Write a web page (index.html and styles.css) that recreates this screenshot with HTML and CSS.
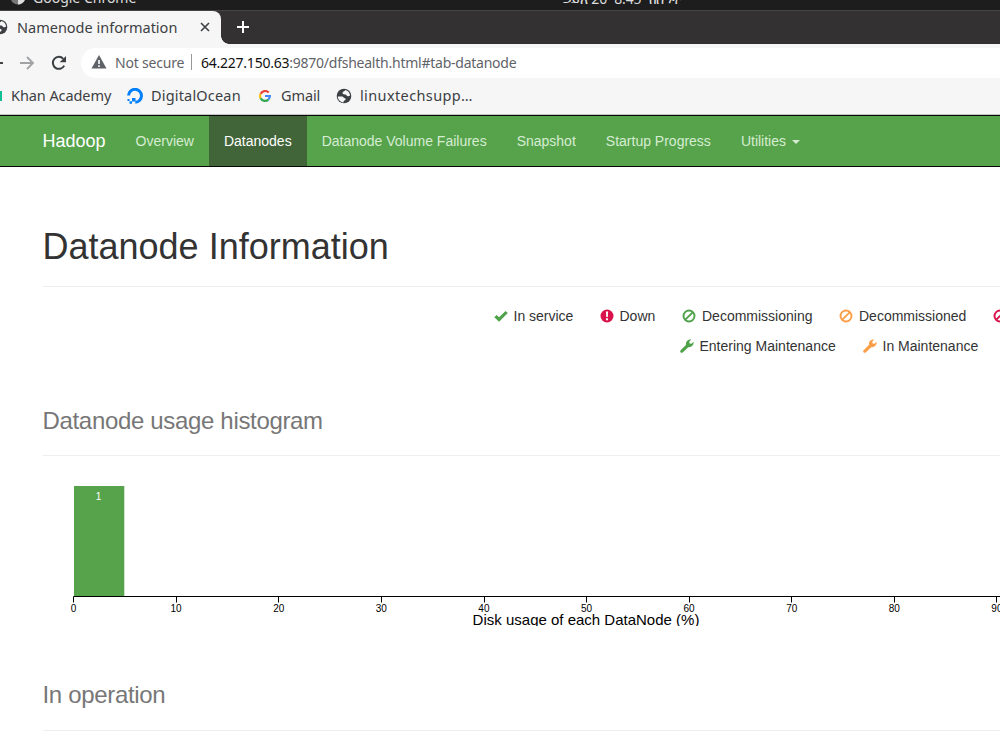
FILE: index.html
```html
<!DOCTYPE html>
<html lang="en">
<head>
    <meta charset="UTF-8">
    <title>Namenode information</title>
    <link rel="stylesheet" href="styles.css">
</head>
<body>
    <!-- Shared icons -->
    <svg class="defs">
        <symbol id="globe" viewBox="0 0 16 16">
            <circle cx="8" cy="8" r="7.3" fill="currentColor"/>
            <path d="M1.800 8.500H6c1.500 0 1.700 1.800 3 1.800.8 0 .9 1.200.2 1.800-.8.700-1.700.8-1.800 2.300C4.300 14 2 11.700 1.800 8.500zM9.300 2C9.300 3.400 6.500 3.200 6.500 5c0 1.500 2 1.500 3 1.500S10.700 8.300 12 8.300c.9 0 1.400-.5 2.100-.5C14 4.800 12 2.600 9.300 2z" fill="#f6f6f6"/>
        </symbol>
        <symbol id="ban" viewBox="0 0 14 14">
            <circle cx="7" cy="7" r="5.500" fill="none" stroke="currentColor" stroke-width="1.900"/>
            <path d="M3.300 10.700l7.400-7.400" stroke="currentColor" stroke-width="1.900"/>
        </symbol>
        <symbol id="wrench" viewBox="0 0 14 14">
            <path d="M.4 11.400L5.900 5.900C5.500 2.600 8 .2 11.300.6L9.200 2.700l.5 1.700 1.700.4 2.200-2.100c.5 3.400-2 6-5.300 5.500L2.700 13.600c-1.500.9-3.200-.8-2.300-2.200z" fill="currentColor"/>
        </symbol>
    </svg>

    <!-- Desktop bar -->
    <div class="topbar">
        <svg class="chrome-icon" viewBox="0 0 16 16"><circle cx="8" cy="8" r="7.500" fill="#777"/><path d="M8 8L14 3.500A7.500 7.500 0 0 1 8 15.500z" fill="#ddd"/><circle cx="8" cy="8" r="3" fill="#aaa"/></svg>
        <span class="app-name">Google Chrome</span>
        <span class="clock">ኃይለ 20&nbsp; 8:45 &nbsp;ከሰዓት</span>
    </div>

    <!-- Tabs -->
    <div class="tabstrip">
        <div class="tab">
            <svg class="tab-icon"><use href="#globe"/></svg>
            <span class="tab-title">Namenode information</span>
            <svg class="tab-close" viewBox="0 0 10 10"><path d="M1 1l8 8M9 1l-8 8" stroke="#3c4043" stroke-width="1.600"/></svg>
        </div>
        <div class="tab-curve"></div>
        <svg class="new-tab" viewBox="0 0 12 12"><path d="M6 0v12M0 6h12" stroke="#fff" stroke-width="2"/></svg>
    </div>

    <!-- Toolbar -->
    <div class="toolbar">
        <svg class="back" viewBox="0 0 3 16"><path d="M0 8h3" stroke="#444" stroke-width="2"/></svg>
        <svg class="forward" viewBox="0 0 16 16"><path d="M1 8h13M8 2l6 6-6 6" fill="none" stroke="#a0a2a4" stroke-width="1.800"/></svg>
        <svg class="reload" viewBox="0 0 16 16"><path d="M13.200 10.600A6 6 0 1 1 12.300 3.800" fill="none" stroke="#3c4043" stroke-width="2"/><path d="M15 1v6.300H8.700z" fill="#3c4043"/></svg>
        <div class="address">
            <svg class="warning" viewBox="0 0 16 14"><path d="M8 0l7.500 13.500H.5z" fill="#5f6368"/><path d="M8 5v4M8 10.300v1.700" stroke="#fff" stroke-width="1.600"/></svg>
            <span class="secure">Not secure</span>
            <span class="divider"></span>
            <span class="url"><b>64.227.150.63</b><span class="path">:9870/dfshealth.html#tab-datanode</span></span>
        </div>
    </div>

    <!-- Bookmarks -->
    <div class="bookmarks">
        <span class="khan-icon"></span>
        <span class="bm khan">Khan Academy</span>
        <svg class="do-icon" viewBox="0 0 16 16"><path d="M1.500 7.500A6.500 6.500 0 1 1 8.300 14.300" fill="none" stroke="#0080ff" stroke-width="3"/><path d="M5 10h3.500v3.500H5zM2.500 13.200h2.500v2.500H2.500zM.5 11h2v2h-2z" fill="#0080ff"/></svg>
        <span class="bm ocean">DigitalOcean</span>
        <svg class="g-icon" viewBox="0 0 12 12"><g fill="none" stroke-width="2.200"><path d="M9.700 2.600A4.900 4.900 0 0 0 1.600 3.900" stroke="#ea4335"/><path d="M1.600 3.900a4.900 4.900 0 0 0 0 4.300" stroke="#fbbc05"/><path d="M1.600 8.200a4.900 4.900 0 0 0 7.700 1.400" stroke="#34a853"/><path d="M9.300 9.600A4.900 4.900 0 0 0 10.900 6H6" stroke="#4285f4"/></g></svg>
        <span class="bm gmail">Gmail</span>
        <svg class="link-icon"><use href="#globe"/></svg>
        <span class="bm linux">linuxtechsupp…</span>
    </div>

    <!-- Hadoop navigation -->
    <nav class="navbar">
        <a class="brand">Hadoop</a>
        <a>Overview</a>
        <a class="active">Datanodes</a>
        <a>Datanode Volume Failures</a>
        <a>Snapshot</a>
        <a>Startup Progress</a>
        <a>Utilities <span class="caret"></span></a>
    </nav>

    <main>
        <h1>Datanode Information</h1>

        <div class="legend">
            <div class="legend-row">
                <span class="green"><svg viewBox="0 0 14 14"><path d="M.3 8.200l2.300-2.300 2.500 2.400L11.500 1.900l2.300 2.200-8.700 8.700z" fill="currentColor"/></svg></span><span class="service">In service</span>
                <span class="red"><svg viewBox="0 0 14 14"><circle cx="7" cy="7" r="6.500" fill="currentColor"/><path d="M5.900 2.500h2.200L7.800 8H6.200zM6 9.200h2v2H6z" fill="#fff"/></svg></span><span class="down">Down</span>
                <span class="green"><svg><use href="#ban"/></svg></span><span class="decommissioning">Decommissioning</span>
                <span class="orange"><svg><use href="#ban"/></svg></span><span class="decommissioned">Decommissioned</span>
                <span class="red last"><svg><use href="#ban"/></svg></span>
            </div>
            <div class="legend-row second">
                <span class="green"><svg><use href="#wrench"/></svg></span><span class="entering">Entering Maintenance</span>
                <span class="orange"><svg><use href="#wrench"/></svg></span><span>In Maintenance</span>
            </div>
        </div>

        <h3>Datanode usage histogram</h3>
        <svg class="histogram" width="957" height="150">
            <rect x="31" y="10" width="50.300" height="110" fill="#56a34c"/>
            <text class="count" x="55.500" y="24">1</text>
            <path class="axis" d="M30.500 126.500v-6H957M133.500 120.500v6M235.500 120.500v6M338.500 120.500v6M441.500 120.500v6M543.500 120.500v6M646.500 120.500v6M748.500 120.500v6M851.500 120.500v6M953.500 120.500v6"/>
            <g class="ticks">
                <text x="30.500" y="136">0</text>
                <text x="133.100" y="136">10</text>
                <text x="235.700" y="136">20</text>
                <text x="338.300" y="136">30</text>
                <text x="440.900" y="136">40</text>
                <text x="543.500" y="136">50</text>
                <text x="646.100" y="136">60</text>
                <text x="748.700" y="136">70</text>
                <text x="851.300" y="136">80</text>
                <text x="953.900" y="136">90</text>
            </g>
            <text class="label" x="543" y="149">Disk usage of each DataNode (%)</text>
        </svg>

        <h3 class="operation">In operation</h3>
    </main>
</body>
</html>
```
FILE: styles.css
```css
* {
    margin: 0;
    padding: 0;
    box-sizing: border-box;
}

body {
    width: 1000px;
    height: 750px;
    overflow: hidden;
    background: #fff;
    color: #333;
    font-family: "Liberation Sans", Arial, sans-serif;
    font-size: 14px;
    white-space: nowrap;
}

svg {
    display: block;
    flex-shrink: 0;
}

.defs {
    display: none;
}

.topbar,
.tabstrip,
.toolbar,
.bookmarks {
    display: flex;
    align-items: center;
    font-family: "Noto Sans", "Open Sans", sans-serif;
}

/* Desktop bar */
.topbar {
    height: 10px;
    overflow: hidden;
    align-items: flex-end;
    padding-left: 10px;
    background: #1d1d1d;
    color: #ddd;
    font-size: 14px;
    line-height: 20px;
}

.chrome-icon {
    width: 16px;
    height: 16px;
    margin-bottom: 5px;
}

.app-name {
    width: 531px;
    margin-left: 7px;
    margin-bottom: 2px;
}

.clock {
    margin-bottom: 1px;
    margin-left: -1px;
    letter-spacing: -0.1px;
}

/* Tabs */
.tabstrip {
    height: 34px;
    background: #333132;
    border-top: 1px solid #444;
}

.tab {
    display: flex;
    align-items: center;
    width: 221px;
    height: 34px;
    padding-bottom: 2px;
    background: #f6f6f6;
    border-radius: 0 8px 0 0;
    color: #3c4043;
    font-size: 14.5px;
}

.tab-icon {
    width: 16px;
    height: 16px;
    margin-left: -8px;
}

.tab-title {
    width: 183px;
    margin-left: 9px;
}

.tab-close {
    width: 10px;
    height: 10px;
}

.tab-curve {
    width: 8px;
    height: 8px;
    align-self: flex-end;
    background: radial-gradient(circle at 100% 0, #333132 7.5px, #f6f6f6 8px);
}

.new-tab {
    width: 12px;
    height: 12px;
    margin: 0 0 2px 8px;
}

/* Toolbar */
.toolbar {
    height: 38px;
    background: #f6f6f6;
}

.back {
    width: 3px;
    height: 16px;
}

.forward {
    width: 16px;
    height: 16px;
    margin-left: 16px;
}

.reload {
    width: 16px;
    height: 16px;
    margin-left: 16px;
}

.address {
    display: flex;
    align-items: center;
    flex: 1;
    height: 30px;
    margin-left: 14px;
    padding: 0 0 2px 10px;
    background: #fff;
    border-radius: 15px 0 0 15px;
    color: #5f6368;
}

.warning {
    width: 16px;
    height: 14px;
    margin-right: 8px;
}

.secure {
    width: 76px;
    letter-spacing: -0.2px;
}

.divider {
    width: 1px;
    height: 16px;
    margin-right: 9px;
    background: #999;
}

.url {
    letter-spacing: -0.24px;
}

.url b {
    color: #111;
    font-weight: 400;
}

/* Bookmarks */
.bookmarks {
    height: 33px;
    padding-bottom: 5px;
    background: #f6f6f6;
    border-bottom: 1px solid #c4c4c4;
    color: #3c4043;
    font-size: 14.5px;
}

.bm {
    margin-top: -1px;
}

.khan-icon {
    width: 2px;
    height: 10px;
    margin-right: 9px;
    background: #14bf96;
}

.khan {
    width: 116px;
    letter-spacing: -0.08px;
}

.do-icon {
    width: 16px;
    height: 16px;
    margin-right: 8px;
}

.ocean {
    width: 108px;
    letter-spacing: 0.18px;
}

.g-icon {
    width: 12px;
    height: 12px;
    margin-right: 10px;
}

.gmail {
    width: 55px;
    letter-spacing: -0.1px;
}

.link-icon {
    width: 16px;
    height: 16px;
    margin-right: 8px;
}

.linux {
    letter-spacing: 0.38px;
}

/* Hadoop navigation */
.navbar {
    display: flex;
    height: 52px;
    padding-left: 27.5px;
    background: #57a34b;
    border-top: 1px solid #080808;
    border-bottom: 1px solid #080808;
}

.navbar a {
    padding: 15px;
    color: #d5ecd2;
    line-height: 20px;
}

.navbar .brand {
    color: #fff;
    font-size: 18px;
}

.navbar .active {
    background: #416539;
    color: #fff;
}

.caret {
    display: inline-block;
    margin-left: 2px;
    vertical-align: middle;
    border-top: 4px solid;
    border-right: 4px solid transparent;
    border-left: 4px solid transparent;
}

/* Page content */
main {
    padding: 60px 0 0 43px;
}

h1 {
    height: 60px;
    border-bottom: 1px solid #eee;
    font-size: 36px;
    font-weight: 400;
    line-height: 40px;
    text-indent: -0.5px;
}

.legend {
    padding: 14px 0 0 450.5px;
    overflow: hidden;
}

.legend-row {
    display: flex;
    align-items: center;
    height: 30px;
}

.legend-row span {
    flex-shrink: 0;
}

.legend-row.second {
    padding-left: 186px;
}

.legend svg {
    width: 14px;
    height: 14px;
    margin-right: 6px;
}

.service {
    width: 86px;
}

.down {
    width: 62.5px;
}

.decommissioning {
    width: 137px;
}

.decommissioned {
    width: 134px;
}

.entering {
    width: 163px;
}

.green {
    color: #4fa24a;
}

.red {
    color: #d9124b;
}

.orange {
    color: #fa9f47;
}

.last {
    width: 7px;
    overflow: hidden;
}

h3 {
    height: 51px;
    margin-top: 44px;
    border-bottom: 1px solid #eee;
    color: #777;
    font-size: 24px;
    font-weight: 400;
    letter-spacing: -0.33px;
    line-height: 32px;
    text-indent: -0.5px;
}

/* Histogram */
.histogram {
    margin-top: 20px;
    overflow: hidden;
}

.histogram text {
    text-anchor: middle;
}

.histogram .count {
    fill: #fff;
    font-size: 10px;
}

.ticks {
    fill: #000;
    font-size: 10px;
}

.axis {
    fill: none;
    stroke: #000;
}

.label {
    fill: #000;
    font-size: 15px;
}

.operation {
    margin-top: 53px;
    height: 52px;
}
```
